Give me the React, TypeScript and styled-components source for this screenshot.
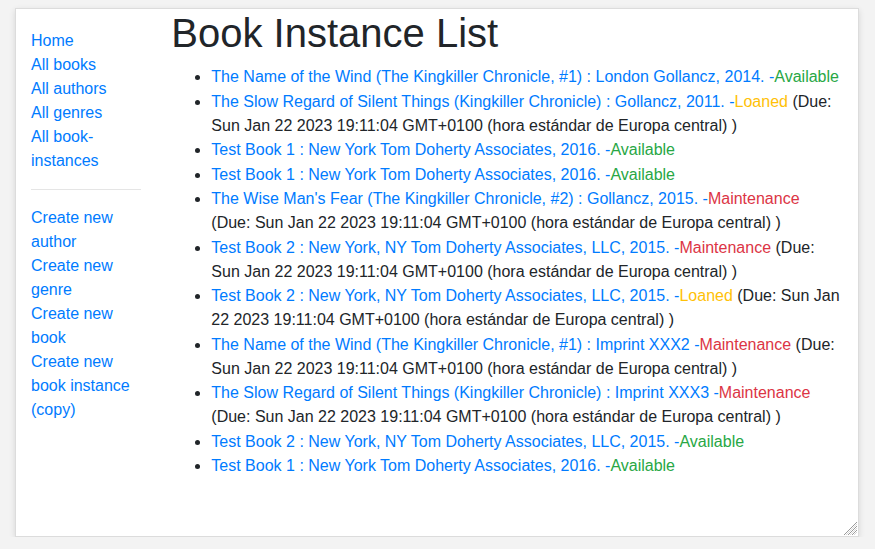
import React from "react";
import styled, { createGlobalStyle } from "styled-components";

const Global = createGlobalStyle`
  html, body { margin: 0; padding: 0; background: #f3f3f3; }
  body {
    font-family: "Liberation Sans", Arial, sans-serif;
    font-size: 16px;
    line-height: 1.5;
    color: #212529;
  }
  * { box-sizing: border-box; }
`;

const Frame = styled.div`
  position: relative;
  margin: 8px 0 0 15px;
  width: 844px;
  height: 529px;
  background: #fff;
  border: 1px solid #dcdcdc;
  box-shadow: 0 2px 6px rgba(0, 0, 0, 0.12);
  overflow: hidden;
`;

const Grip = styled.svg`
  position: absolute;
  right: 1px;
  bottom: 1px;
  width: 14px;
  height: 14px;
`;

const Row = styled.div`
  display: flex;
`;

const SideCol = styled.div`
  flex: 0 0 16.666667%;
  max-width: 16.666667%;
  padding: 0 15px;
`;

const MainCol = styled.div`
  flex: 0 0 83.333333%;
  max-width: 83.333333%;
  padding: 0 15px;
`;

const SideNav = styled.ul`
  margin: 20px 0 0;
  padding: 0;
  list-style: none;
`;

const Rule = styled.hr`
  margin: 16px 0;
  border: 0;
  height: 0;
  border-top: 1px solid rgba(0, 0, 0, 0.1);
`;

const Link = styled.a`
  color: #007bff;
  text-decoration: none;
`;

const Title = styled.h1`
  margin: 0 0 8px;
  font-size: 40px;
  font-weight: 500;
  line-height: 1.2;
`;

const List = styled.ul`
  margin: 0 0 16px;
  padding-left: 40px;
`;

const Item = styled.li`
  margin-bottom: 0.5px;
`;

type Status = "Available" | "Loaned" | "Maintenance";

const statusColors: Record<Status, string> = {
  Available: "#28a745",
  Loaned: "#ffc107",
  Maintenance: "#dc3545",
};

const StatusText = styled.span<{ $status: Status }>`
  color: ${(p) => statusColors[p.$status]};
`;

const DUE = "Sun Jan 22 2023 19:11:04 GMT+0100 (hora estándar de Europa central)";

const items: { title: string; imprint: string; status: Status }[] = [
  { title: "The Name of the Wind (The Kingkiller Chronicle, #1)", imprint: "London Gollancz, 2014.", status: "Available" },
  { title: "The Slow Regard of Silent Things (Kingkiller Chronicle)", imprint: "Gollancz, 2011.", status: "Loaned" },
  { title: "Test Book 1", imprint: "New York Tom Doherty Associates, 2016.", status: "Available" },
  { title: "Test Book 1", imprint: "New York Tom Doherty Associates, 2016.", status: "Available" },
  { title: "The Wise Man's Fear (The Kingkiller Chronicle, #2)", imprint: "Gollancz, 2015.", status: "Maintenance" },
  { title: "Test Book 2", imprint: "New York, NY Tom Doherty Associates, LLC, 2015.", status: "Maintenance" },
  { title: "Test Book 2", imprint: "New York, NY Tom Doherty Associates, LLC, 2015.", status: "Loaned" },
  { title: "The Name of the Wind (The Kingkiller Chronicle, #1)", imprint: "Imprint XXX2", status: "Maintenance" },
  { title: "The Slow Regard of Silent Things (Kingkiller Chronicle)", imprint: "Imprint XXX3", status: "Maintenance" },
  { title: "Test Book 2", imprint: "New York, NY Tom Doherty Associates, LLC, 2015.", status: "Available" },
  { title: "Test Book 1", imprint: "New York Tom Doherty Associates, 2016.", status: "Available" },
];

const navTop = ["Home", "All books", "All authors", "All genres", "All book-instances"];
const navBottom = ["Create new author", "Create new genre", "Create new book", "Create new book instance (copy)"];

export default function App() {
  return (
    <>
      <Global />
      <Frame>
        <Row>
          <SideCol>
            <SideNav>
              {navTop.map((t) => (
                <li key={t}>
                  <Link href="#">{t}</Link>
                </li>
              ))}
              <li>
                <Rule />
              </li>
              {navBottom.map((t) => (
                <li key={t}>
                  <Link href="#">{t}</Link>
                </li>
              ))}
            </SideNav>
          </SideCol>
          <MainCol>
            <Title>Book Instance List</Title>
            <List>
              {items.map((it, i) => (
                <Item key={i}>
                  <Link href="#">
                    {it.title} : {it.imprint} -
                  </Link>
                  <StatusText $status={it.status}>{it.status}</StatusText>
                  {it.status !== "Available" && <span> (Due: {DUE} )</span>}
                </Item>
              ))}
            </List>
          </MainCol>
        </Row>
        <Grip viewBox="0 0 14 14">
          <g stroke="#9a9a9a" strokeWidth="1">
            <line x1="14" y1="1" x2="1" y2="14" />
            <line x1="14" y1="5" x2="5" y2="14" />
            <line x1="14" y1="9" x2="9" y2="14" />
          </g>
          <g stroke="#d8d8d8" strokeWidth="1">
            <line x1="14" y1="3" x2="3" y2="14" />
            <line x1="14" y1="7" x2="7" y2="14" />
            <line x1="14" y1="11" x2="11" y2="14" />
          </g>
        </Grip>
      </Frame>
    </>
  );
}
